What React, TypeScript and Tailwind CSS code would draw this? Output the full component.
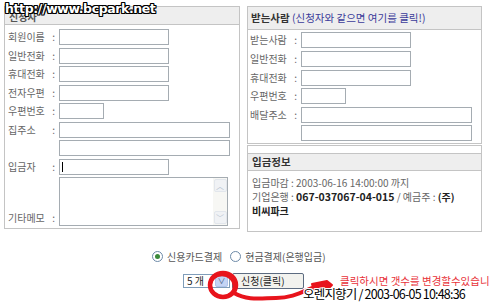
import { FunctionComponent } from "react";

const font = "font-['Noto_Sans_CJK_KR','Noto_Sans',sans-serif]";

const Field: FunctionComponent<{ w: string; caret?: boolean }> = ({ w, caret }) => (
  <div className={`${w} h-[16px] border border-[#a5acb2] bg-white relative`}>
    {caret && <div className="absolute left-[2px] top-[2px] w-px h-[10px] bg-black" />}
  </div>
);

const Row: FunctionComponent<{ label: string; lw: string; children: React.ReactNode }> = ({ label, lw, children }) => (
  <div className="flex items-center h-[16px]">
    <div className={`${lw} flex items-center pr-[4px] text-[10px] leading-none text-[#666]`}>
      <span>{label}</span>
      <span className="ml-auto">:</span>
    </div>
    {children}
  </div>
);

const outline =
  "[text-shadow:1px_0_0_#000,-1px_0_0_#000,0_1px_0_#000,0_-1px_0_#000,1px_1px_0_#000,-1px_-1px_0_#000,1px_-1px_0_#000,-1px_1px_0_#000]";
const outlineWhite =
  "[text-shadow:1px_0_0_#fff,-1px_0_0_#fff,0_1px_0_#fff,0_-1px_0_#fff,1px_1px_0_#fff,-1px_-1px_0_#fff,1px_-1px_0_#fff,-1px_1px_0_#fff]";

const App: FunctionComponent = () => {
  return (
    <div className={`w-[500px] h-[306px] relative overflow-hidden bg-white ${font}`}>
      <div className="flex items-start pt-[6px] pl-[4px] gap-[7px]">
        {/* 신청자 */}
        <div className="w-[236px] h-[223px] border border-[#c4c4c4] flex flex-col">
          <div className="h-[18px] bg-[#eeeeee] border-b border-[#c4c4c4] pl-[4px] flex items-end text-[10px] leading-[14px] font-bold text-[#555]">
            신청자
          </div>
          <div className="flex flex-col gap-[2.5px] pt-[4px] pl-[3px]">
            <Row label="회원이름" lw="w-[51px]"><Field w="w-[110px]" /></Row>
            <Row label="일반전화" lw="w-[51px]"><Field w="w-[110px]" /></Row>
            <Row label="휴대전화" lw="w-[51px]"><Field w="w-[110px]" /></Row>
            <Row label="전자우편" lw="w-[51px]"><Field w="w-[110px]" /></Row>
            <Row label="우편번호" lw="w-[51px]"><Field w="w-[45px]" /></Row>
            <Row label="집주소" lw="w-[51px]"><Field w="w-[171px]" /></Row>
            <div className="flex h-[16px] pl-[51px]"><Field w="w-[171px]" /></div>
            <Row label="입금자" lw="w-[51px]"><Field w="w-[110px]" caret /></Row>
            <div className="flex items-end h-[49px]">
              <div className="w-[51px] flex items-center pr-[4px] pb-[3px] text-[10px] leading-none text-[#666]">
                <span>기타메모</span>
                <span className="ml-auto">:</span>
              </div>
              <div className="w-[169px] h-[49px] border border-[#a5acb2] bg-white flex justify-end">
                <div className="w-[14px] h-full bg-[#f7f7f4] flex flex-col justify-between items-center py-[1px]">
                  <div className="w-[13px] h-[13px] bg-[#f0f2f5] border border-[#e2e6ec] rounded-[2px] flex items-center justify-center text-[8px] leading-none text-[#b8c3d0]">︿</div>
                  <div className="w-[13px] h-[13px] bg-[#f0f2f5] border border-[#e2e6ec] rounded-[2px] flex items-center justify-center text-[8px] leading-none text-[#b8c3d0]">﹀</div>
                </div>
              </div>
            </div>
          </div>
        </div>

        {/* 받는사람 / 입금정보 */}
        <div className="w-[235px] flex flex-col">
          <div className="h-[138px] border border-[#c4c4c4] flex flex-col">
            <div className="h-[23px] bg-[#eeeeee] border-b border-[#c4c4c4] pl-[3px] flex items-center text-[10.5px] leading-none">
              <span className="font-bold text-[#333]">받는사람</span>
              <span className="text-[#3b3b9a]">&nbsp;(신청자와 같으면 여기를 클릭!)</span>
            </div>
            <div className="flex flex-col gap-[2.8px] pt-[2px] pl-[2px]">
              <Row label="받는사람" lw="w-[51px]"><Field w="w-[110px]" /></Row>
              <Row label="일반전화" lw="w-[51px]"><Field w="w-[110px]" /></Row>
              <Row label="휴대전화" lw="w-[51px]"><Field w="w-[110px]" /></Row>
              <Row label="우편번호" lw="w-[51px]"><Field w="w-[45px]" /></Row>
              <Row label="배달주소" lw="w-[51px]"><Field w="w-[171px]" /></Row>
              <div className="flex h-[16px] pl-[51px] -mt-[1px]"><Field w="w-[171px]" /></div>
            </div>
          </div>
          <div className="h-[87px] mt-[1px] border border-[#c4c4c4] pt-[7px] flex flex-col">
            <div className="h-[18px] bg-[#eeeeee] border-y border-[#c4c4c4] pl-[4px] flex items-center text-[10.5px] font-bold text-[#333]">
              입금정보
            </div>
            <div className="pl-[4px] pt-[5px] text-[10px] leading-[14px] text-[#666]">
              <div>입금마감 : 2003-06-16 14:00:00 까지</div>
              <div>
                기업은행 : <b className="text-[#222] text-[10.5px]">067-037067-04-015</b> / 예금주 : <b className="text-[#222]">(주)</b>
              </div>
              <div><b className="text-[#222]">비씨파크</b></div>
            </div>
          </div>
        </div>
      </div>

      {/* 결제 방법 */}
      <div className="flex items-center gap-[4px] pl-[152px] mt-[19px] text-[10px] leading-none text-[#555]">
        <div className="w-[11px] h-[11px] rounded-full border border-[#6d8aa8] bg-white flex items-center justify-center">
          <div className="w-[5px] h-[5px] rounded-full bg-[#3a8a3a]" />
        </div>
        <span>신용카드결제</span>
        <div className="ml-[4px] w-[11px] h-[11px] rounded-full border border-[#6d8aa8] bg-white" />
        <span>현금결제(은행입금)</span>
      </div>

      <div className="flex items-center pl-[183px] mt-[11px] gap-[2px]">
        <div className="w-[47px] h-[14px] border border-[#7f9db9] bg-white flex items-center">
          <span className="pl-[3px] text-[10px] leading-none text-[#222]">5 개</span>
          <div className="ml-auto mr-px w-[13px] h-[11px] rounded-[2px] bg-[#c4d4f4] border border-[#b0c4ec] flex items-center justify-center text-[8px] leading-none text-[#4d6185]">
            ∨
          </div>
        </div>
        <div className="w-[72px] h-[16px] border border-[#5c6b80] rounded-[2px] bg-[#f2f2ee] flex items-center pl-[8px] text-[10px] leading-none text-[#222]">
          신청(클릭)
        </div>
      </div>

      {/* 빨간 표시 */}
      <svg className="absolute left-0 top-0 pointer-events-none" width="500" height="306" viewBox="0 0 500 306">
        <ellipse cx="223" cy="285" rx="13" ry="12" fill="none" stroke="#e8141c" strokeWidth="4.5" />
        <ellipse cx="222" cy="286" rx="12" ry="11" fill="none" stroke="#e8141c" strokeWidth="2.5" />
        <path d="M234 293 C248 301 262 298 276 298 C290 298 298 294 312 288" fill="none" stroke="#e8141c" strokeWidth="4" strokeLinecap="round" />
        <path d="M312 284 L327 281 L332 285 L327 290 L314 291 Z" fill="#e8141c" stroke="#e8141c" strokeWidth="2" strokeLinejoin="round" />
      </svg>
      <div className="absolute left-[340px] top-[276px] text-[10.5px] leading-none text-[#e8323a] whitespace-nowrap">
        클릭하시면 갯수를 변경할수있습니
      </div>
      <div className={`absolute left-[303px] top-[288px] text-[12.5px] leading-none tracking-[-0.8px] text-black whitespace-nowrap ${outlineWhite}`}>
        오렌지향기 / 2003-06-05 10:48:36
      </div>
      <div className={`absolute left-[5px] top-[3px] font-['DejaVu_Sans',sans-serif] font-bold text-[12.5px] leading-none tracking-[-0.4px] text-white whitespace-nowrap ${outline}`}>
        http://www.bcpark.net
      </div>
    </div>
  );
};
export default App;
